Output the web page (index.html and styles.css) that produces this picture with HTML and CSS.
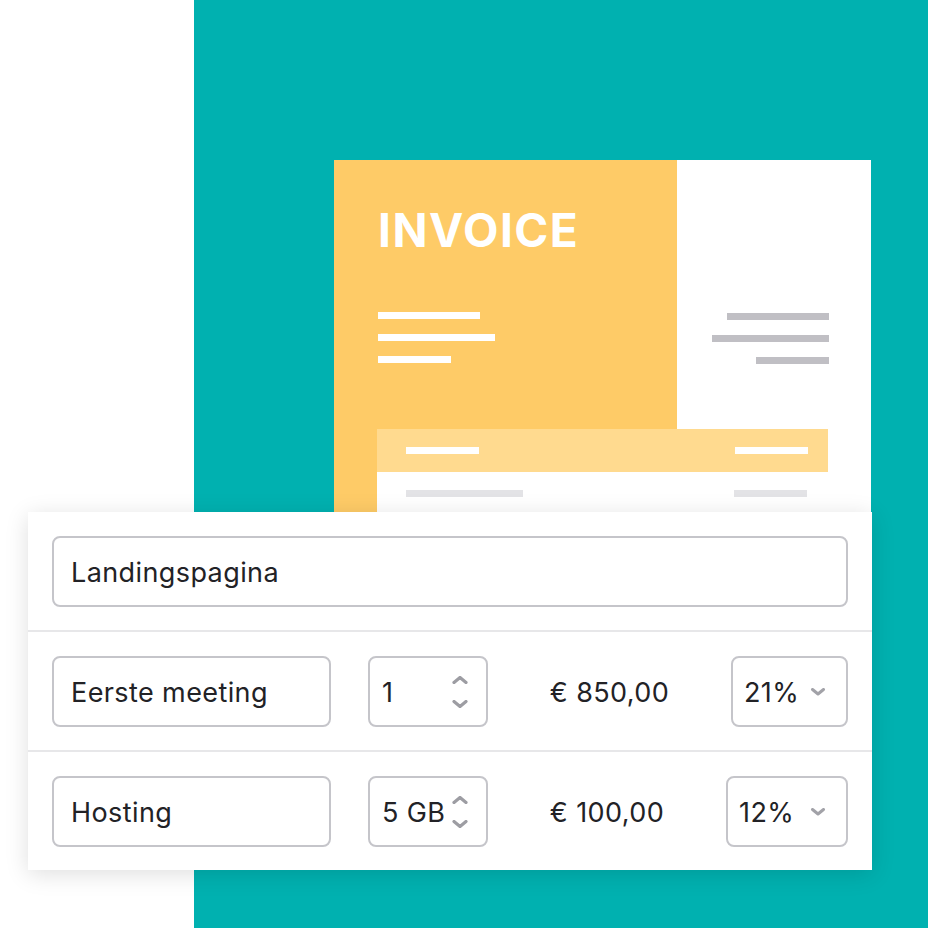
FILE: index.html
```html
<!DOCTYPE html>
<html>
<head>
<meta charset="utf-8">
<link rel="stylesheet" href="styles.css">
</head>
<body>
<div class="scene">
  <div class="spacer"></div>
  <div class="teal">
    <div class="invoice">
      <div class="inv-head">
        <div class="inv-yellow">
          <div class="inv-title">INVOICE</div>
          <div class="inv-lines">
            <span class="wl w1"></span>
            <span class="wl w2"></span>
            <span class="wl w3"></span>
          </div>
        </div>
        <div class="inv-white">
          <span class="gl g1"></span>
          <span class="gl g2"></span>
          <span class="gl g3"></span>
        </div>
      </div>
      <div class="inv-body">
        <div class="inv-edge"></div>
        <div class="inv-table">
          <div class="strip">
            <span class="sl s1"></span>
            <span class="sl s2"></span>
          </div>
          <div class="trow">
            <span class="tl t1"></span>
            <span class="tl t2"></span>
          </div>
        </div>
      </div>
    </div>
  </div>

  <div class="form">
    <div class="row">
      <div class="field full">Landingspagina</div>
    </div>
    <div class="row">
      <div class="field name">Eerste meeting</div>
      <div class="field qty">
        <span class="qv">1</span>
        <span class="spin">
          <svg width="16" height="8" viewBox="0 0 16 8"><path d="M2 6.5 L8 1.5 L14 6.5" fill="none" stroke="#9d9da3" stroke-width="3.2" stroke-linecap="round" stroke-linejoin="round"/></svg>
          <svg width="16" height="8" viewBox="0 0 16 8"><path d="M2 1.5 L8 6.5 L14 1.5" fill="none" stroke="#9d9da3" stroke-width="3.2" stroke-linecap="round" stroke-linejoin="round"/></svg>
        </span>
      </div>
      <div class="price">€ 850,00</div>
      <div class="field sel sel-a">
        <span class="sv">21%</span>
        <svg class="chev" width="16" height="8" viewBox="0 0 16 8"><path d="M2.5 1.5 L8 6 L13.5 1.5" fill="none" stroke="#a2a2a8" stroke-width="3" stroke-linecap="round" stroke-linejoin="round"/></svg>
      </div>
    </div>
    <div class="row">
      <div class="field name">Hosting</div>
      <div class="field qty">
        <span class="qv">5 GB</span>
        <span class="spin">
          <svg width="16" height="8" viewBox="0 0 16 8"><path d="M2 6.5 L8 1.5 L14 6.5" fill="none" stroke="#9d9da3" stroke-width="3.2" stroke-linecap="round" stroke-linejoin="round"/></svg>
          <svg width="16" height="8" viewBox="0 0 16 8"><path d="M2 1.5 L8 6.5 L14 1.5" fill="none" stroke="#9d9da3" stroke-width="3.2" stroke-linecap="round" stroke-linejoin="round"/></svg>
        </span>
      </div>
      <div class="price">€ 100,00</div>
      <div class="field sel sel-b">
        <span class="sv">12%</span>
        <svg class="chev" width="16" height="8" viewBox="0 0 16 8"><path d="M2.5 1.5 L8 6 L13.5 1.5" fill="none" stroke="#a2a2a8" stroke-width="3" stroke-linecap="round" stroke-linejoin="round"/></svg>
      </div>
    </div>
  </div>
</div>
</body>
</html>
```

FILE: styles.css
```css
* { box-sizing: border-box; }
html, body { margin: 0; padding: 0; background: #fff; }
body { font-family: Inter, "Noto Sans", "Liberation Sans", sans-serif; }

.scene {
  position: relative;
  width: 928px;
  height: 928px;
  display: flex;
  overflow: hidden;
}
.spacer { width: 194px; flex: none; }
.teal {
  flex: 1;
  background: #00b1b0;
  padding-top: 160px;
  padding-left: 140px;
}

.invoice {
  width: 537px;
  height: 500px;
  background: #fff;
  display: flex;
  flex-direction: column;
}
.inv-head { display: flex; height: 269px; }
.inv-yellow {
  width: 343px;
  background: #fecb67;
  padding: 45px 0 0 44px;
}
.inv-title {
  color: #fff;
  font-weight: 700;
  font-size: 46px;
  line-height: 50px;
  letter-spacing: 1.5px;
}
.inv-lines {
  margin-top: 57px;
  display: flex;
  flex-direction: column;
  gap: 15px;
}
.wl { display: block; height: 7px; background: #fff; }
.w1 { width: 102px; }
.w2 { width: 117px; }
.w3 { width: 73px; }

.inv-white {
  flex: 1;
  display: flex;
  flex-direction: column;
  align-items: flex-end;
  gap: 15px;
  padding: 153px 42px 0 0;
}
.gl { display: block; height: 7px; background: #c0bfc4; }
.g1 { width: 102px; }
.g2 { width: 117px; }
.g3 { width: 73px; }

.inv-body { display: flex; flex: 1; }
.inv-edge { width: 43px; background: #fecb67; }
.inv-table { width: 451px; }
.strip {
  height: 43px;
  background: #ffda8f;
  display: flex;
  justify-content: space-between;
  align-items: center;
  padding: 0 20px 0 29px;
}
.sl { display: block; height: 7px; width: 73px; background: #fff; }
.trow {
  display: flex;
  justify-content: space-between;
  padding: 18px 21px 0 29px;
}
.tl { display: block; height: 7px; background: #e3e3e6; }
.t1 { width: 117px; }
.t2 { width: 73px; }

.form {
  position: absolute;
  left: 28px;
  top: 512px;
  width: 844px;
  background: #fff;
  box-shadow: 0 4px 22px rgba(0, 0, 0, 0.13);
}
.row {
  display: flex;
  align-items: center;
  padding: 24px 24px 23px;
  border-bottom: 2px solid #e7e7e9;
}
.row:last-child { border-bottom: none; }

.field {
  height: 71px;
  border: 2px solid #c5c5ca;
  border-radius: 8px;
  display: flex;
  align-items: center;
  font-size: 27px;
  letter-spacing: 0.4px;
  color: #222226;
  padding-left: 17px;
  padding-top: 2px;
}
.full { width: 100%; }
.name { width: 279px; flex: none; }
.qty {
  width: 120px;
  flex: none;
  margin-left: 37px;
  padding-left: 12px;
  padding-right: 18px;
  justify-content: space-between;
}
.spin {
  display: flex;
  flex-direction: column;
  gap: 16px;
  margin-top: -1px;
}
.spin svg { display: block; }
.price {
  flex: 1;
  text-align: center;
  font-size: 27px;
  letter-spacing: 0.4px;
  color: #222226;
  padding-top: 2px;
}
.sel {
  flex: none;
  padding-left: 11px;
  padding-right: 20px;
  justify-content: space-between;
}
.sel-a { width: 117px; }
.sel-b { width: 122px; }
.chev { display: block; margin-top: -2px; }
```
